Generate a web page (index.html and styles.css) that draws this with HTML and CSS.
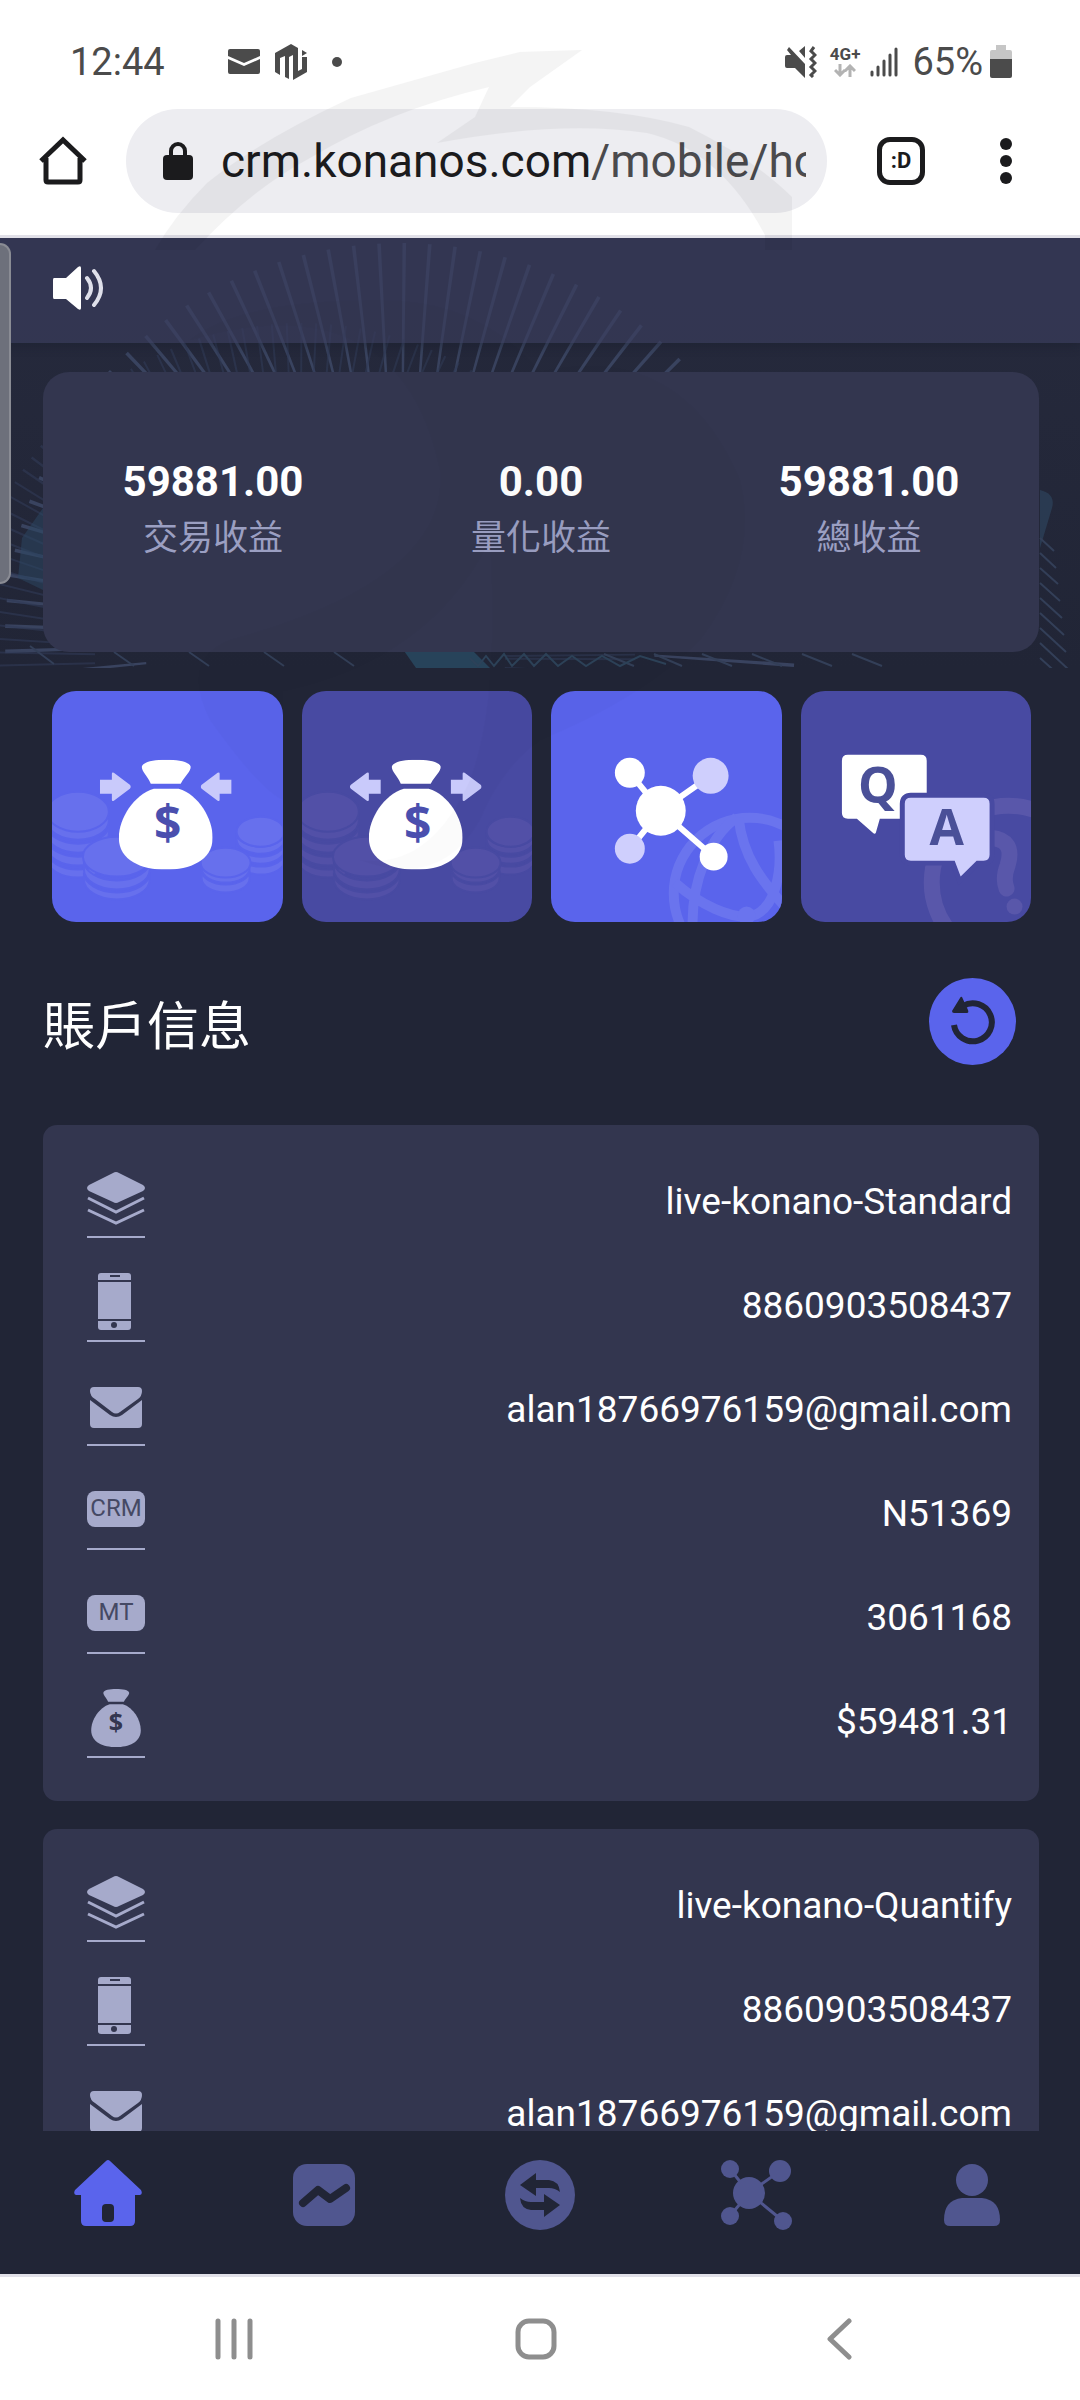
FILE: index.html
```html
<!DOCTYPE html>
<html lang="zh-Hant">
<head>
<meta charset="utf-8">
<meta name="viewport" content="width=device-width, initial-scale=1">
<title>Konanos CRM</title>
<link rel="stylesheet" href="styles.css">
</head>
<body>
<svg class="defs" aria-hidden="true">
  <symbol id="arrow-right" viewBox="0 0 31 30"><path d="M0 8H12V2Q12 0 14 1L30 13Q32 15 30 17L14 29Q12 30 12 28V22H0Z"/></symbol>
  <symbol id="coins" viewBox="0 0 231 231">
    <g class="stack">
      <path d="M-5 160a31 19 0 0 0 62 0v8a31 19 0 0 1-62 0z"/>
      <path d="M-5 147a31 19 0 0 0 62 0v9a31 19 0 0 1-62 0z"/>
      <path d="M-5 134a31 19 0 0 0 62 0v9a31 19 0 0 1-62 0z"/>
      <path d="M-5 121a31 19 0 0 0 62 0v9a31 19 0 0 1-62 0z"/>
      <ellipse cx="26" cy="121" rx="31" ry="20"/>
    </g>
    <g class="stack">
      <path d="M185 162a24 14 0 0 0 48 0v8a24 14 0 0 1-48 0z"/>
      <path d="M185 152a24 14 0 0 0 48 0v7a24 14 0 0 1-48 0z"/>
      <path d="M185 142a24 14 0 0 0 48 0v7a24 14 0 0 1-48 0z"/>
      <ellipse cx="209" cy="141" rx="24" ry="15"/>
    </g>
    <g class="stack">
      <path d="M32 182a33 20 0 0 0 66 0v7a33 20 0 0 1-66 0z"/>
      <path d="M32 170a33 20 0 0 0 66 0v9a33 20 0 0 1-66 0z"/>
      <ellipse cx="65" cy="166" rx="34" ry="20"/>
    </g>
    <g class="stack">
      <path d="M150 180a24 14 0 0 0 48 0v8a24 14 0 0 1-48 0z"/>
      <path d="M150 172a24 14 0 0 0 48 0v6a24 14 0 0 1-48 0z"/>
      <ellipse cx="174" cy="172" rx="25" ry="15"/>
    </g>
  </symbol>
  <symbol id="bag" viewBox="67 69 94 110">
    <path d="M90 76C91 71 102 69 114 69C127 69 138 71 139 76C139 81 134 84 129 93H99C95 84 90 81 90 76Z"/>
    <path d="M102 98H127C147 104 161 128 161 147C161 170 138 179 114 179C90 179 67 170 67 147C67 128 82 104 102 98Z"/>
  </symbol>
  <symbol id="layers" viewBox="0 0 58 58">
    <path d="M26 4Q29 2 32 4L56 16Q60 19 56 22L32 33Q29 35 26 33L2 22Q-2 19 2 16Z"/>
    <path d="M1 29L29 43L57 29M1 41L29 54L57 41" fill="none" stroke="currentColor" stroke-width="3"/>
  </symbol>
  <symbol id="phone" viewBox="0 0 58 58">
    <path d="M14 0H41Q44 0 44 3V7H11V3Q11 0 14 0Z"/><path d="M11 9H44V46H11Z"/><path d="M11 48H44V54Q44 57 41 57H14Q11 57 11 54Z"/>
    <path d="M23 3H33" stroke="#33364f" stroke-width="2"/><circle cx="27" cy="52" r="3" fill="#33364f"/>
  </symbol>
  <symbol id="mail" viewBox="0 0 58 58">
    <path d="M7 10H51Q55 10 55 14Q55 19 51 22L33 35Q29 38 25 35L8 22Q3 19 3 14Q3 10 7 10Z"/>
    <path d="M3 23L23 38Q29 42 35 38L55 23V47Q55 51 51 51H7Q3 51 3 47Z"/>
  </symbol>
</svg>

<header class="status">
  <time>12:44</time>
  <svg class="status-mail" width="32" height="26" viewBox="0 0 32 26" fill="#4b4b4b"><path d="M2 0H30Q32 0 32 2V7L16 14L0 7V2Q0 0 2 0Z"/><path d="M0 10L16 17L32 10V23Q32 25 30 25H2Q0 25 0 23Z"/></svg>
  <svg width="32" height="36" viewBox="0 0 32 36" fill="#4b4b4b"><path d="M0 9L16 0L23 4V27L27 25V13H32V28L18 36V11L14 13V35L10 33V12L5 14V31L0 28Z"/><path d="M27 6L32 9L27 12Z"/></svg>
  <span class="dot"></span>
  <span class="grow"></span>
  <svg width="32" height="32" viewBox="0 0 32 32"><path d="M2 9H6L2 4L4 1L20 18V32L10 22H2Q0 22 0 20V11Q0 9 2 9ZM14 5L20 0V12Z" fill="#4b4b4b"/><path d="M29 1L26 5L30 9L26 13L30 17L26 21L30 25L26 29L28 31" fill="none" stroke="#4b4b4b" stroke-width="3"/></svg>
  <span class="network"><b>4G+</b><svg width="22" height="13" viewBox="0 0 22 13" fill="none" stroke="#b3b3b3" stroke-width="3"><path d="M6 0V11M1 6L6 11L11 6M16 13V2M11 7L16 2L21 7"/></svg></span>
  <svg class="signal" width="28" height="30" viewBox="0 0 28 30" stroke="#4b4b4b" stroke-width="3" stroke-linecap="round"><path d="M2 25V28M8 20V28M14 14V28M20 8V28M26 2V28"/></svg>
  <span class="battery"><span>65%</span><svg width="22" height="34" viewBox="0 0 22 34"><path d="M6 0H16V5H20Q22 5 22 7V16H0V7Q0 5 2 5H6Z" fill="#c6c6c6"/><path d="M0 14H22V31Q22 33 20 33H2Q0 33 0 31Z" fill="#4b4b4b"/></svg></span>
</header>

<div class="toolbar">
  <button class="plain" aria-label="Home"><svg width="48" height="50" viewBox="0 0 48 50" fill="none" stroke="#1b1b1d" stroke-width="5"><path d="M2 25L24 4L46 25M7 22V44Q7 46 9 46H39Q41 46 41 44V22"/></svg></button>
  <button class="address"><svg width="30" height="38" viewBox="0 0 30 38"><path d="M8 16V9A7 7 0 0 1 22 9V16" fill="none" stroke="#1b1b1d" stroke-width="4"/><rect y="13" width="30" height="25" rx="4" fill="#1b1b1d"/></svg><span class="url">crm.konanos.com<span>/mobile/home</span></span></button>
  <button class="tabs" aria-label="Tabs">:D</button>
  <button class="plain" aria-label="Menu"><svg width="12" height="46" viewBox="0 0 12 46" fill="#1b1b1d"><circle cx="6" cy="6" r="6"/><circle cx="6" cy="23" r="6"/><circle cx="6" cy="40" r="6"/></svg></button>
</div>

<main class="app">
  <section class="hero">
    <svg class="rays" viewBox="0 0 1080 430" preserveAspectRatio="none" fill="none" aria-hidden="true">
      <circle cx="400" cy="400" r="325" stroke="#39435f" stroke-width="140" stroke-dasharray="3 18"/>
      <circle cx="300" cy="420" r="270" stroke="#303b56" stroke-width="130" stroke-dasharray="2 10" opacity=".6"/>
      <path d="M22 300L43 270V352L18 340Z" fill="#2c4763" opacity=".5"/>
      <path d="M1040 252Q1056 256 1052 270L1040 310Z" fill="#2c4058" opacity=".8"/>
      <path d="M1040 300l14 13m-14 2l16 15m-16 0l18 16m-18-1l20 18m-20-3l22 20m-22-5l24 22m-24-7l26 24m-26-9l28 26m-28-11l30 27m-30-12l30 27M30 408l24 18m60-12l20 14m55-14l20 14m55-14l20 14m50-14l20 14m250-12l30 12m20-12l28 12m20-12l30 12m20-12l30 12m20-12l30 12m20-12l30 12" stroke="#333f58" stroke-width="2"/>
      <path d="M402 410H470L490 430H416Z" fill="#27435a"/>
      <path d="M470 420l8 8l8-10l8 10l10-12l8 12l12-12l10 12l12-12l12 12l14-10l14 10l16-10l18 10l20-10l26 8" stroke="#2d4259" stroke-width="2"/>
    </svg>
    <div class="notice"><svg width="52" height="46" viewBox="0 0 52 46"><path d="M1 13H13L25 2Q28 0 28 3V43Q28 46 25 44L13 34H1Q0 34 0 32V15Q0 13 1 13Z" fill="#fff"/><path d="M34 13Q42 23 34 33M41 6Q55 23 41 40" fill="none" stroke="#dfe0ea" stroke-width="4" stroke-linecap="round"/></svg></div>
    <div class="stats">
      <div><strong>59881.00</strong><span>交易收益</span></div>
      <div><strong>0.00</strong><span>量化收益</span></div>
      <div><strong>59881.00</strong><span>總收益</span></div>
    </div>
  </section>

  <section class="tiles">
    <button class="tile" aria-label="Deposit"><svg viewBox="0 0 231 231">
      <use href="#coins" width="231" height="231"/>
      <use href="#bag" x="67" y="69" width="94" height="110" fill="#fff"/>
      <g fill="#c9cafb"><use href="#arrow-right" x="48" y="81" width="31" height="30"/><use href="#arrow-right" x="48" y="81" width="31" height="30" transform="translate(228 0) scale(-1 1)"/></g>
      <text x="116" y="149" class="dollar">$</text>
    </svg></button>
    <button class="tile deep" aria-label="Withdraw"><svg viewBox="0 0 231 231">
      <use href="#coins" width="231" height="231"/>
      <use href="#bag" x="67" y="69" width="94" height="110" fill="#fff"/>
      <g fill="#c9cafb"><use href="#arrow-right" x="149" y="81" width="31" height="30"/><use href="#arrow-right" x="149" y="81" width="31" height="30" transform="translate(228 0) scale(-1 1)"/></g>
      <text x="116" y="149" class="dollar">$</text>
    </svg></button>
    <button class="tile" aria-label="Network"><svg viewBox="0 0 231 231">
      <g fill="none" stroke="#6a74ee" stroke-width="10"><circle cx="199" cy="203" r="76"/><path d="M188 127C192 165 210 190 240 222M186 127C160 145 140 190 142 240M124 192C150 215 180 228 200 226C225 220 232 180 228 150"/></g>
      <circle cx="196" cy="225" r="9" fill="#6a74ee"/>
      <path d="M79 82L110 120L160 85M79 158L110 120L163 166" fill="none" stroke="#fff" stroke-width="6"/>
      <g fill="#fff"><circle cx="79" cy="82" r="15"/><circle cx="110" cy="120" r="25"/><circle cx="163" cy="166" r="14"/></g>
      <g fill="#cfcffd"><circle cx="160" cy="85" r="18"/><circle cx="79" cy="158" r="15"/></g>
    </svg></button>
    <button class="tile deep" aria-label="Questions"><svg viewBox="0 0 231 231">
      <g fill="none" stroke="#5957aa" stroke-width="16"><circle cx="208" cy="192" r="77"/><path d="M166 172Q168 146 190 147Q215 149 207 175Q202 188 206 198" stroke-linecap="round"/></g><circle cx="214" cy="216" r="8" fill="#5957aa"/>
      <path d="M47 64H120Q126 64 126 70V128H79L75 142Q74 144 72 142L56 128H47Q41 128 41 122V70Q41 64 47 64Z" fill="#fff"/>
      <path d="M110 107H183Q189 107 189 113V164Q189 170 183 170H176L160 186L154 170H110Q104 170 104 164V113Q104 107 110 107Z" fill="#cfcffd" stroke="#484aa2" stroke-width="10" paint-order="stroke"/>
      <text x="77" y="112" class="letter">Q</text><text x="146" y="154" class="letter">A</text>
    </svg></button>
  </section>

  <div class="heading">
    <h1>賬戶信息</h1>
    <button class="refresh" aria-label="Refresh"><svg width="44" height="50" viewBox="0 0 44 50"><path d="M3 29A19 19 0 1 0 12 10" fill="none" stroke="#212536" stroke-width="6"/><path d="M11 1Q10 0 9 2L1 15Q1 17 3 17H16Q18 17 17 14Z" fill="#212536"/></svg></button>
  </div>

  <section class="account">
    <div class="row"><span class="label"><svg role="img" aria-label="Server"><use href="#layers"/></svg></span><span>live-konano-Standard</span></div>
    <div class="row"><span class="label"><svg role="img" aria-label="Phone"><use href="#phone"/></svg></span><span>8860903508437</span></div>
    <div class="row"><span class="label"><svg role="img" aria-label="Email"><use href="#mail"/></svg></span><span>alan18766976159@gmail.com</span></div>
    <div class="row"><span class="label"><b>CRM</b></span><span>N51369</span></div>
    <div class="row"><span class="label"><b>MT</b></span><span>3061168</span></div>
    <div class="row"><span class="label"><svg viewBox="0 0 58 58"><use href="#bag" x="3" y="0" width="52" height="58"/><text x="29" y="42" class="dollar small">$</text></svg></span><span>$59481.31</span></div>
  </section>

  <section class="account">
    <div class="row"><span class="label"><svg role="img" aria-label="Server"><use href="#layers"/></svg></span><span>live-konano-Quantify</span></div>
    <div class="row"><span class="label"><svg role="img" aria-label="Phone"><use href="#phone"/></svg></span><span>8860903508437</span></div>
    <div class="row"><span class="label"><svg role="img" aria-label="Email"><use href="#mail"/></svg></span><span>alan18766976159@gmail.com</span></div>
  </section>
</main>

<nav class="tabbar">
  <a href="#home" class="active" aria-label="Home"><svg width="70" height="70" viewBox="0 0 70 70"><path d="M33 1Q35 -1 37 1L68 30Q70 34 67 35H62V61Q62 66 57 66H13Q8 66 8 61V35H3Q0 34 2 30Z"/><rect x="29" y="44" width="12" height="18" rx="4" fill="#212536"/></svg></a>
  <a href="#market" aria-label="Market"><svg width="62" height="62" viewBox="0 0 62 62"><rect width="62" height="62" rx="14"/><path d="M10 39L25 26L37 35L53 24" fill="none" stroke="#212536" stroke-width="8" stroke-linecap="round" stroke-linejoin="round"/></svg></a>
  <a href="#transfer" aria-label="Transfer"><svg width="70" height="70" viewBox="0 0 70 70"><circle cx="35" cy="35" r="35"/><path d="M15 25L31 13V20H44Q54 21 55 32Q50 28 44 28H31V36ZM55 45L39 57V50H26Q16 49 15 38Q20 42 26 42H39V34Z" fill="#212536"/></svg></a>
  <a href="#network" aria-label="Network"><svg width="71" height="70" viewBox="0 0 71 70"><path d="M9 9L28 33L59 11M9 56L28 33L62 61" fill="none" stroke="currentColor" stroke-width="3"/><circle cx="9" cy="9" r="9"/><circle cx="59" cy="11" r="11"/><circle cx="28" cy="33" r="16"/><circle cx="9" cy="56" r="9"/><circle cx="62" cy="61" r="9"/></svg></a>
  <a href="#profile" aria-label="Profile"><svg width="56" height="62" viewBox="0 0 56 62"><circle cx="28" cy="16" r="16"/><path d="M18 34H38Q56 36 56 56Q56 62 50 62H6Q0 62 0 56Q0 36 18 34Z"/></svg></a>
</nav>

<nav class="system">
  <button class="plain" aria-label="Recents"><svg width="38" height="42" viewBox="0 0 38 42" stroke="#8e8e8e" stroke-width="5" stroke-linecap="round"><path d="M3 3V39M19 3V39M35 3V39"/></svg></button>
  <button class="plain" aria-label="Home"><svg width="42" height="42" viewBox="0 0 42 42" fill="none" stroke="#8e8e8e" stroke-width="5"><rect x="3" y="3" width="36" height="36" rx="11"/></svg></button>
  <button class="plain" aria-label="Back"><svg width="26" height="42" viewBox="0 0 26 42" fill="none" stroke="#8e8e8e" stroke-width="5" stroke-linecap="round" stroke-linejoin="round"><path d="M23 3L4 21L23 39"/></svg></button>
</nav>

<span class="edge-handle"></span>
<svg class="watermark" viewBox="0 0 1080 940" aria-hidden="true">
  <path d="M582 50L520 52L475 63L351 98Q260 140 207 183Q175 215 155 250H195Q250 190 310 158Q390 110 489 87L475 117L437 143Q560 120 647 133Q720 150 765 235V250H792V197Q755 160 689 127Q620 107 510 107L530 87Z"/>
  <path d="M190 340Q400 280 440 470Q450 580 230 640Q180 660 210 720Q260 790 283 800L283 691Q430 660 490 540Q500 700 470 780Q430 870 360 860Q440 890 480 820Q500 770 540 740Q640 700 700 640Q760 560 740 480Q680 340 540 372Q480 300 380 300Q240 300 190 340Z" opacity=".35"/>
</svg>
</body>
</html>
```

FILE: styles.css
```css
* { box-sizing: border-box; }
body {
  margin: 0;
  height: 100vh;
  display: flex;
  flex-direction: column;
  position: relative;
  overflow: hidden;
  background: #fff;
  color: #fff;
  font-family: Roboto, "Noto Sans CJK TC", sans-serif;
}
button { font: inherit; color: inherit; border: 0; padding: 0; background: none; }
svg { display: block; flex: none; }
.defs { position: absolute; width: 0; height: 0; }
.grow { flex: 1; }

/* phone status bar */
.status {
  flex: none;
  height: 109px;
  padding: 14px 68px 0 70px;
  display: flex;
  align-items: center;
  color: #4b4b4b;
  font-size: 38px;
}
.status time { margin-right: 63px; }
.status-mail { margin-right: 15px; }
.dot { width: 10px; height: 10px; margin-left: 25px; border-radius: 50%; background: #4b4b4b; }
.network { margin: 0 10px 0 13px; display: flex; flex-direction: column; align-items: center; gap: 2px; font-size: 17px; line-height: 16px; }
.battery { display: flex; align-items: center; gap: 7px; margin-left: 14px; }

/* browser toolbar */
.toolbar {
  flex: none;
  height: 129px;
  padding: 0 68px 22px 39px;
  display: flex;
  align-items: center;
  border-bottom: 3px solid #e1e0e8;
  color: #1b1b1d;
}
.address {
  flex: 1;
  min-width: 0;
  height: 104px;
  margin: 0 50px 0 39px;
  padding: 0 21px 0 37px;
  border-radius: 52px;
  background: #ededf1;
  display: flex;
  align-items: center;
  gap: 28px;
  font-size: 46px;
}
.url { flex: 1; overflow: hidden; white-space: nowrap; text-align: left; line-height: 60px; }
.url span { color: #4a4a4d; }
.tabs { width: 48px; height: 48px; margin-right: 75px; border: 5px solid #1b1b1d; border-radius: 13px; font-size: 22px; font-weight: 700; line-height: 34px; }

/* page */
.app { flex: 1; min-height: 0; overflow: hidden; background: #212536; }
.hero { position: relative; padding-bottom: 16px; background: linear-gradient(#262a3d, #212536); }
.rays { position: absolute; inset: 0; width: 100%; height: 100%; }
.notice { position: relative; height: 105px; padding: 27px 53px; background: rgba(58, 62, 93, .65); box-shadow: 0 2px 10px rgba(20, 24, 38, .4); }
.stats {
  position: relative;
  margin: 29px 41px 0 43px;
  height: 280px;
  padding: 85px 6px 0;
  display: flex;
  border-radius: 26px;
  background: #33364f;
}
.stats div { flex: 1; display: flex; flex-direction: column; align-items: center; gap: 6px; }
.stats strong { font-size: 42px; line-height: 50px; }
.stats span { font-size: 35px; line-height: 52px; color: #9b9fc2; }

.tiles { display: grid; grid-template-columns: repeat(4, 1fr); gap: 19px; padding: 23px 49px 0 52px; }
.tile { --face: #5a64ec; --coin: #6770ed; border-radius: 24px; overflow: hidden; background: var(--face); }
.tile.deep { --face: #484aa2; --coin: #5250a7; }
.tile svg { width: 100%; height: auto; }
.stack { fill: var(--coin); stroke: var(--face); stroke-width: 2; }
.dollar { font: 700 48px "Open Sans", sans-serif; text-anchor: middle; fill: #4a4fae; }
.dollar.small { font-size: 25px; fill: #33364f; }
.letter { font: 700 50px "Open Sans", sans-serif; text-anchor: middle; fill: #4a5098; }

.heading { display: flex; justify-content: space-between; align-items: center; margin: 56px 64px 60px 43px; }
.heading h1 { margin: 0; padding-top: 14px; font-size: 52px; font-weight: 400; line-height: 68px; }
.refresh { width: 87px; height: 87px; border-radius: 50%; background: #5a64ec; display: grid; place-items: center; }

.account { margin: 0 41px 28px 43px; padding: 44px 27px 43px 44px; border-radius: 14px; background: #33364f; display: grid; gap: 35px; }
.row { display: flex; justify-content: space-between; font-size: 37px; line-height: 66px; }
.label { height: 69px; width: 58px; border-bottom: 2px solid #a6aacb; color: #a6aacb; }
.label svg { width: 58px; height: 58px; fill: currentColor; }
.label b { display: block; height: 36px; margin-top: 10px; border-radius: 8px; background: #a6aacb; color: #454964; font-size: 24px; font-weight: 400; line-height: 35px; text-align: center; }

.tabbar { flex: none; height: 146px; padding-bottom: 16px; display: flex; align-items: center; background: #212536; border-bottom: 3px solid #e1e0e8; }
.tabbar a { flex: 1; display: flex; justify-content: center; color: #50568f; fill: currentColor; }
.tabbar .active { color: #5a64ec; }
.system { flex: none; height: 123px; padding: 0 90px 0 83px; display: flex; align-items: center; }
.system button { flex: 1; display: flex; justify-content: center; }

/* overlays */
.edge-handle { position: absolute; left: 0; top: 243px; width: 11px; height: 341px; border: 2px solid #8a8c94; border-left: 0; border-radius: 0 12px 12px 0; background: #6d707b; }
.watermark { position: absolute; left: 0; top: 0; width: 100%; fill: #000; opacity: .04; pointer-events: none; }
```
